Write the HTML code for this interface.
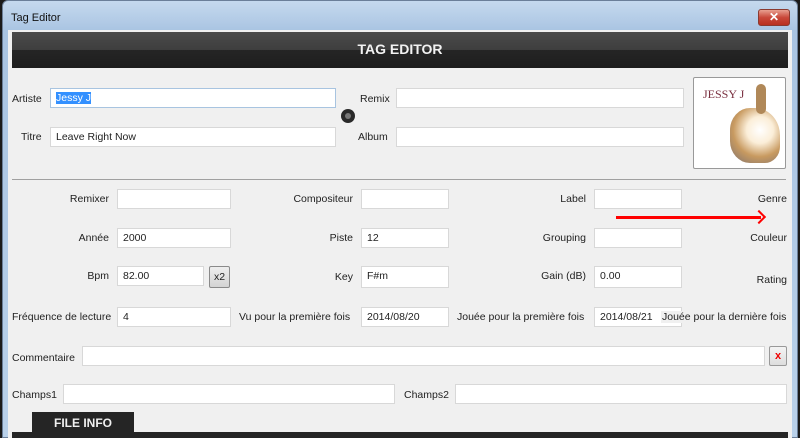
<!DOCTYPE html>
<html><head><meta charset="utf-8"><style>
*{margin:0;padding:0;box-sizing:border-box}
body{width:800px;height:438px;overflow:hidden;background:#1a1a1a;font-family:"Liberation Sans",sans-serif;font-size:10.5px;color:#222;position:relative}
.frame{position:absolute;left:2px;top:0;width:796px;height:438px;background:linear-gradient(#c5d9ee,#a9c4e2 30px,#b9d1ea);border-radius:6px 6px 0 0;border:1px solid #6b7f99}
.content{position:absolute;left:8px;top:30px;width:784px;height:408px;background:#f0f0f0}
.t{position:absolute;white-space:nowrap}
.r{text-align:right}
.in{position:absolute;background:#fff;border:1px solid #d8d8d8;height:20px;padding:3px 5px;font-size:10.5px}
.hdr{position:absolute;left:12px;top:32px;width:776px;height:36px;background:linear-gradient(#4a4a4a,#3e3e3e 50%,#252525 50%,#1e1e1e);color:#f2f2f2;font-weight:bold;font-size:14px;text-align:center;line-height:34px}
</style></head><body>
<div class="frame"></div>
<div class="t" style="left:11px;top:12px;color:#111;font-size:11px">Tag Editor</div>
<div style="position:absolute;left:758px;top:9px;width:32px;height:17px;border-radius:3px;border:1px solid #8a3a30;background:linear-gradient(#e8a090,#c9483a 50%,#b93020);color:#fff;font-weight:bold;text-align:center;font-size:12px;line-height:15px">✕</div>
<div class="content"></div>
<div class="hdr">TAG EDITOR</div>

<div class="t" style="left:12px;top:93px">Artiste</div>
<div class="in" style="left:50px;top:88px;width:286px;border-color:#a8c4e0"><span style="background:#3390ff;color:#fff">Jessy J</span></div>
<div class="t" style="left:21px;top:131px">Titre</div>
<div class="in" style="left:50px;top:127px;width:286px">Leave Right Now</div>
<div style="position:absolute;left:341px;top:109px;width:14px;height:14px;border-radius:50%;background:#2a2a2a"><div style="margin:4px;width:6px;height:6px;border-radius:50%;background:#777"></div></div>
<div class="t" style="left:360px;top:93px">Remix</div>
<div class="in" style="left:396px;top:88px;width:288px"></div>
<div class="t" style="left:358px;top:131px">Album</div>
<div class="in" style="left:396px;top:127px;width:288px"></div>
<div style="position:absolute;left:693px;top:77px;width:93px;height:92px;border:1px solid #999;border-radius:2px;background:#fff;overflow:hidden">
<div style="position:absolute;left:36px;top:30px;width:50px;height:55px;border-radius:40% 50% 30% 40%;background:radial-gradient(circle at 60% 40%,#fff 0,#fbeed8 30%,#c89a60 60%,rgba(120,80,40,0.7) 80%,rgba(255,255,255,0) 100%)"></div>
<div style="position:absolute;left:62px;top:6px;width:10px;height:30px;border-radius:5px;background:#b08858"></div>
<div class="t" style="left:9px;top:9px;color:#7a3040;font-family:'Liberation Serif',serif;font-size:12px">JESSY J</div></div>
<div style="position:absolute;left:12px;top:179px;width:774px;height:1px;background:#a0a0a0"></div>

<div class="t r" style="left:30px;width:79px;top:193px">Remixer</div>
<div class="in" style="left:117px;top:189px;width:114px"></div>
<div class="t r" style="left:240px;width:113px;top:193px">Compositeur</div>
<div class="in" style="left:361px;top:189px;width:88px"></div>
<div class="t r" style="left:490px;width:96px;top:193px">Label</div>
<div class="in" style="left:594px;top:189px;width:88px"></div>
<div class="t r" style="left:700px;width:87px;top:193px">Genre</div>
<div style="position:absolute;left:616px;top:216px;width:145px;height:3px;background:#f00"></div>
<div style="position:absolute;left:754px;top:212px;width:10px;height:10px;border-top:2px solid #f00;border-right:2px solid #f00;transform:rotate(45deg)"></div>

<div class="t r" style="left:30px;width:79px;top:232px">Année</div>
<div class="in" style="left:117px;top:228px;width:114px">2000</div>
<div class="t r" style="left:240px;width:113px;top:232px">Piste</div>
<div class="in" style="left:361px;top:228px;width:88px">12</div>
<div class="t r" style="left:490px;width:96px;top:232px">Grouping</div>
<div class="in" style="left:594px;top:228px;width:88px"></div>
<div class="t r" style="left:700px;width:87px;top:232px">Couleur</div>

<div class="t r" style="left:30px;width:79px;top:270px">Bpm</div>
<div class="in" style="left:117px;top:266px;width:87px">82.00</div>
<div style="position:absolute;left:209px;top:266px;width:21px;height:22px;border:1px solid #8a8a8a;border-radius:2px;background:linear-gradient(#eee,#d4d4d4);text-align:center;line-height:20px">x2</div>
<div class="t r" style="left:240px;width:113px;top:271px">Key</div>
<div class="in" style="left:361px;top:266px;width:88px;height:22px">F#m</div>
<div class="t r" style="left:490px;width:96px;top:270px">Gain (dB)</div>
<div class="in" style="left:594px;top:266px;width:88px;height:22px">0.00</div>
<div class="t r" style="left:700px;width:87px;top:274px">Rating</div>

<div class="t" style="left:12px;top:311px">Fréquence de lecture</div>
<div class="in" style="left:117px;top:307px;width:114px">4</div>
<div class="t" style="left:239px;top:311px">Vu pour la première fois</div>
<div class="in" style="left:361px;top:307px;width:88px">2014/08/20</div>
<div class="t" style="left:457px;top:311px">Jouée pour la première fois</div>
<div class="in" style="left:594px;top:307px;width:88px">2014/08/21</div>
<div class="t" style="left:661px;top:311px;background:#f0f0f0;padding-left:1px">Jouée pour la dernière fois</div>

<div class="t" style="left:12px;top:352px">Commentaire</div>
<div class="in" style="left:82px;top:346px;width:683px"></div>
<div style="position:absolute;left:769px;top:346px;width:18px;height:20px;border:1px solid #999;border-radius:2px;background:linear-gradient(#f4f4f4,#ddd);color:#e00;font-weight:bold;text-align:center;line-height:18px;font-size:11px">x</div>

<div class="t" style="left:12px;top:389px">Champs1</div>
<div class="in" style="left:63px;top:384px;width:332px"></div>
<div class="t" style="left:404px;top:389px">Champs2</div>
<div class="in" style="left:455px;top:384px;width:332px"></div>

<div style="position:absolute;left:32px;top:412px;width:102px;height:22px;background:#252525;color:#f0f0f0;font-weight:bold;font-size:12px;text-align:center;line-height:22px">FILE INFO</div>
<div style="position:absolute;left:12px;top:432px;width:776px;height:6px;background:#252525"></div>
</body></html>
